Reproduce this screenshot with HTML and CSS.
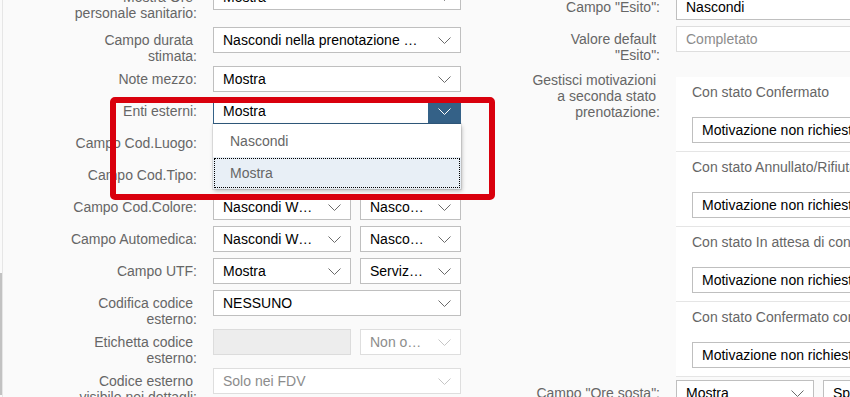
FILE: index.html
```html
<!DOCTYPE html>
<html lang="it">
<head>
    <meta charset="UTF-8">
    <meta name="viewport" content="width=device-width, initial-scale=1.0">
    <title>Impostazioni prenotazione</title>
    <link rel="stylesheet" href="styles.css">
</head>
<body>
<div class="page">
    <div class="rail"><div class="rail-thumb"></div></div>

    <div class="form">
        <!-- colonna sinistra -->
        <div class="column column-left">
            <div class="row row-first">
                <label class="label">Mostra Ore personale sanitario:</label>
                <div class="select"><span class="value">Mostra</span><span class="arrow"><svg width="13" height="7" viewBox="0 0 13 7"><polyline points="0.5,0.5 6.5,6.5 12.5,0.5"/></svg></span></div>
            </div>
            <div class="row">
                <label class="label">Campo durata stimata:</label>
                <div class="select"><span class="value">Nascondi nella prenotazione Web</span><span class="arrow"><svg width="13" height="7" viewBox="0 0 13 7"><polyline points="0.5,0.5 6.5,6.5 12.5,0.5"/></svg></span></div>
            </div>
            <div class="row">
                <label class="label">Note mezzo:</label>
                <div class="select"><span class="value">Mostra</span><span class="arrow"><svg width="13" height="7" viewBox="0 0 13 7"><polyline points="0.5,0.5 6.5,6.5 12.5,0.5"/></svg></span></div>
            </div>
            <div class="row">
                <label class="label">Enti esterni:</label>
                <div class="field">
                    <div class="select is-open"><span class="value">Mostra</span><span class="arrow"><svg width="13" height="7" viewBox="0 0 13 7"><polyline points="0.5,0.5 6.5,6.5 12.5,0.5"/></svg></span></div>
                    <ul class="popup">
                        <li class="option">Nascondi</li>
                        <li class="option is-selected">Mostra</li>
                    </ul>
                </div>
            </div>
            <div class="row">
                <label class="label">Campo Cod.Luogo:</label>
                <div class="select"><span class="value">Mostra</span><span class="arrow"><svg width="13" height="7" viewBox="0 0 13 7"><polyline points="0.5,0.5 6.5,6.5 12.5,0.5"/></svg></span></div>
            </div>
            <div class="row">
                <label class="label">Campo Cod.Tipo:</label>
                <div class="select"><span class="value">Mostra</span><span class="arrow"><svg width="13" height="7" viewBox="0 0 13 7"><polyline points="0.5,0.5 6.5,6.5 12.5,0.5"/></svg></span></div>
            </div>
            <div class="row">
                <label class="label">Campo Cod.Colore:</label>
                <div class="pair">
                    <div class="select"><span class="value">Nascondi Web e App</span><span class="arrow"><svg width="13" height="7" viewBox="0 0 13 7"><polyline points="0.5,0.5 6.5,6.5 12.5,0.5"/></svg></span></div>
                    <div class="select"><span class="value">Nascondi Web e App</span><span class="arrow"><svg width="13" height="7" viewBox="0 0 13 7"><polyline points="0.5,0.5 6.5,6.5 12.5,0.5"/></svg></span></div>
                </div>
            </div>
            <div class="row">
                <label class="label">Campo Automedica:</label>
                <div class="pair">
                    <div class="select"><span class="value">Nascondi Web e App</span><span class="arrow"><svg width="13" height="7" viewBox="0 0 13 7"><polyline points="0.5,0.5 6.5,6.5 12.5,0.5"/></svg></span></div>
                    <div class="select"><span class="value">Nascondi Web e App</span><span class="arrow"><svg width="13" height="7" viewBox="0 0 13 7"><polyline points="0.5,0.5 6.5,6.5 12.5,0.5"/></svg></span></div>
                </div>
            </div>
            <div class="row">
                <label class="label">Campo UTF:</label>
                <div class="pair">
                    <div class="select"><span class="value">Mostra</span><span class="arrow"><svg width="13" height="7" viewBox="0 0 13 7"><polyline points="0.5,0.5 6.5,6.5 12.5,0.5"/></svg></span></div>
                    <div class="select"><span class="value">Servizio richiedente</span><span class="arrow"><svg width="13" height="7" viewBox="0 0 13 7"><polyline points="0.5,0.5 6.5,6.5 12.5,0.5"/></svg></span></div>
                </div>
            </div>
            <div class="row">
                <label class="label">Codifica codice esterno:</label>
                <div class="select"><span class="value">NESSUNO</span><span class="arrow"><svg width="13" height="7" viewBox="0 0 13 7"><polyline points="0.5,0.5 6.5,6.5 12.5,0.5"/></svg></span></div>
            </div>
            <div class="row">
                <label class="label">Etichetta codice esterno:</label>
                <div class="pair">
                    <div class="input is-readonly"></div>
                    <div class="select is-disabled"><span class="value">Non obbligatorio</span><span class="arrow"><svg width="13" height="7" viewBox="0 0 13 7"><polyline points="0.5,0.5 6.5,6.5 12.5,0.5"/></svg></span></div>
                </div>
            </div>
            <div class="row">
                <label class="label">Codice esterno visibile nei dettagli:</label>
                <div class="select is-disabled"><span class="value">Solo nei FDV</span><span class="arrow"><svg width="13" height="7" viewBox="0 0 13 7"><polyline points="0.5,0.5 6.5,6.5 12.5,0.5"/></svg></span></div>
            </div>
        </div>

        <!-- colonna destra -->
        <div class="column column-right">
            <div class="row">
                <label class="label">Campo "Esito":</label>
                <div class="select"><span class="value">Nascondi</span><span class="arrow"><svg width="13" height="7" viewBox="0 0 13 7"><polyline points="0.5,0.5 6.5,6.5 12.5,0.5"/></svg></span></div>
            </div>
            <div class="row">
                <label class="label">Valore default "Esito":</label>
                <div class="input is-disabled"><span class="value">Completato</span></div>
            </div>
            <div class="row">
                <label class="label label-tall">Gestisci motivazioni a seconda stato prenotazione:</label>
                <div class="panel">
                    <div class="panel-item">
                        <div class="panel-title">Con stato Confermato</div>
                        <div class="select"><span class="value">Motivazione non richiesta</span><span class="arrow"><svg width="13" height="7" viewBox="0 0 13 7"><polyline points="0.5,0.5 6.5,6.5 12.5,0.5"/></svg></span></div>
                    </div>
                    <div class="panel-item">
                        <div class="panel-title">Con stato Annullato/Rifiutato</div>
                        <div class="select"><span class="value">Motivazione non richiesta</span><span class="arrow"><svg width="13" height="7" viewBox="0 0 13 7"><polyline points="0.5,0.5 6.5,6.5 12.5,0.5"/></svg></span></div>
                    </div>
                    <div class="panel-item">
                        <div class="panel-title">Con stato In attesa di conferma</div>
                        <div class="select"><span class="value">Motivazione non richiesta</span><span class="arrow"><svg width="13" height="7" viewBox="0 0 13 7"><polyline points="0.5,0.5 6.5,6.5 12.5,0.5"/></svg></span></div>
                    </div>
                    <div class="panel-item">
                        <div class="panel-title">Con stato Confermato con riserva</div>
                        <div class="select"><span class="value">Motivazione non richiesta</span><span class="arrow"><svg width="13" height="7" viewBox="0 0 13 7"><polyline points="0.5,0.5 6.5,6.5 12.5,0.5"/></svg></span></div>
                    </div>
                </div>
            </div>
            <div class="row">
                <label class="label">Campo "Ore sosta":</label>
                <div class="pair">
                    <div class="select"><span class="value">Mostra</span><span class="arrow"><svg width="13" height="7" viewBox="0 0 13 7"><polyline points="0.5,0.5 6.5,6.5 12.5,0.5"/></svg></span></div>
                    <div class="select"><span class="value">Specialità</span><span class="arrow"><svg width="13" height="7" viewBox="0 0 13 7"><polyline points="0.5,0.5 6.5,6.5 12.5,0.5"/></svg></span></div>
                </div>
            </div>
        </div>
    </div>

    <div class="annotation"></div>
</div>
</body>
</html>
```

FILE: styles.css
```css
* {
    box-sizing: border-box;
}
body {
    margin: 0;
    background: #fafafa;
    font-family: "Liberation Sans", Arial, sans-serif;
    font-size: 14px;
    color: #000;
    overflow: hidden;
}
.page {
    position: relative;
    display: flex;
    height: 397px;
    overflow: hidden;
}
.rail {
    flex: none;
    width: 3px;
    display: flex;
    flex-direction: column;
    border-right: 1px solid #e6e6e6;
}
.rail-thumb {
    margin-top: 273px;
    height: 122px;
    background: #c2c2c2;
}
.form {
    display: flex;
    gap: 2px;
    margin-top: -16px;
}
.column {
    flex: none;
    display: flex;
    flex-direction: column;
}
.column-left {
    --label-w: 194px;
}
.column-right {
    --label-w: 197px;
    padding-top: 10px;
}
.row {
    display: grid;
    grid-template-columns: var(--label-w) 248px;
    column-gap: 16px;
    align-items: start;
    margin-bottom: 6px;
}
.row-first {
    margin-bottom: 10px;
}
.label {
    justify-self: end;
    max-width: 130px;
    padding-top: 5px;
    margin-bottom: -4px;
    line-height: 16px;
    text-align: right;
    color: #666;
    white-space: break-spaces;
}
.label-tall {
    padding-top: 7px;
}
.field {
    position: relative;
}
.pair {
    display: grid;
    grid-template-columns: minmax(0, 1fr) 101px;
    column-gap: 9px;
}
.select,
.input {
    display: flex;
    align-items: center;
    min-width: 0;
    height: 26px;
    background: #fff;
    border: 1px solid #bfbfbf;
}
.value {
    flex: 1;
    min-width: 0;
    padding: 0 3px 0 9px;
    white-space: nowrap;
    overflow: hidden;
    text-overflow: ellipsis;
}
.arrow {
    flex: none;
    align-self: stretch;
    width: 32px;
    display: flex;
    align-items: center;
    justify-content: center;
    color: #6a6a6a;
}
.arrow svg {
    fill: none;
    stroke: currentColor;
    stroke-width: 1;
}
.select.is-open {
    border-color: #346187;
}
.select.is-open .arrow {
    background: #346187;
    color: #fff;
}
.select.is-disabled,
.input.is-disabled {
    border-color: #dedede;
    color: #8c8c8c;
}
.select.is-disabled .arrow {
    color: #c6c6c6;
}
.input.is-readonly {
    background: #ededed;
    border-color: #dcdcdc;
}
.popup {
    position: absolute;
    top: 100%;
    left: 0;
    right: 0;
    z-index: 2;
    margin: 0;
    padding: 1px 0 0;
    list-style: none;
    background: #fff;
    box-shadow: 0 0 0 1px rgba(0, 0, 0, 0.08), 1px 2px 4px rgba(0, 0, 0, 0.25);
}
.option {
    height: 32px;
    line-height: 32px;
    padding-left: 17px;
    color: #666;
}
.option.is-selected {
    background: #e8eff6;
    outline: 1px dotted #000;
    outline-offset: -2px;
}
.panel {
    margin-top: 12px;
    margin-bottom: -3px;
    background: #fff;
}
.panel-item {
    padding: 6px 16px 8px;
    border-bottom: 1px solid #e5e5e5;
}
.panel-title {
    line-height: 18px;
    margin-bottom: 16px;
    color: #666;
    white-space: nowrap;
}
.annotation {
    position: absolute;
    left: 110px;
    top: 97px;
    width: 385px;
    height: 103px;
    z-index: 3;
    border: 6px solid #d9000d;
    border-radius: 5px;
}
```
